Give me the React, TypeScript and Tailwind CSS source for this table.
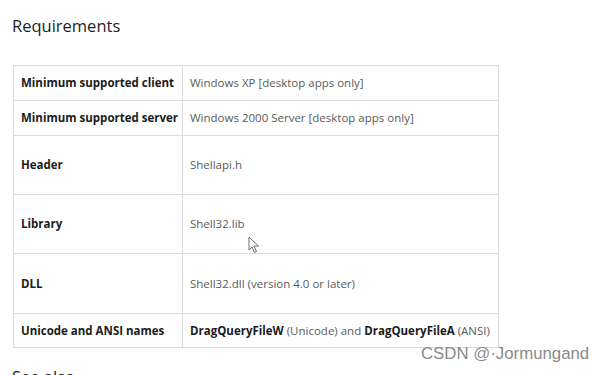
import React from "react";

const rows: { label: string; h: string; value: React.ReactNode }[] = [
  { label: "Minimum supported client", h: "h-[35px]", value: "Windows XP [desktop apps only]" },
  { label: "Minimum supported server", h: "h-[35px]", value: "Windows 2000 Server [desktop apps only]" },
  { label: "Header", h: "h-[59px]", value: "Shellapi.h" },
  { label: "Library", h: "h-[59px]", value: "Shell32.lib" },
  { label: "DLL", h: "h-[60px]", value: "Shell32.dll (version 4.0 or later)" },
  {
    label: "Unicode and ANSI names",
    h: "h-[34px]",
    value: (
      <>
        <b className="font-bold text-[#1b1b1b]">DragQueryFileW</b> (Unicode) and{" "}
        <b className="font-bold text-[#1b1b1b]">DragQueryFileA</b> (ANSI)
      </>
    ),
  },
];

export default function App() {
  return (
    <div className="relative w-[592px] h-[375px] overflow-hidden bg-white" style={{ fontFamily: '"Open Sans", "Noto Sans", sans-serif' }}>
      <div className="pl-[12px] pt-[14px]">
        <h2 className="text-[16.5px] leading-[24px] text-[#1e1e1e] font-normal">Requirements</h2>
        <table className="mt-[27px] ml-px border-collapse w-[486px] table-fixed">
          <colgroup>
            <col className="w-[169px]" />
            <col />
          </colgroup>
          <tbody>
            {rows.map((r) => (
              <tr key={r.label} className={r.h}>
                <td className="border border-[#dcdcdc] px-[7px] text-[11.5px] font-bold text-[#1b1b1b] whitespace-nowrap align-middle">
                  {r.label}
                </td>
                <td className="border border-[#dcdcdc] px-[7px] text-[11.5px] text-[#5a5a5a] whitespace-nowrap align-middle">
                  {r.value}
                </td>
              </tr>
            ))}
          </tbody>
        </table>
        <div className="mt-[17px] text-[16.5px] leading-[24px] text-[#1e1e1e]">See also</div>
      </div>
      <svg className="absolute left-[248px] top-[236px]" width="12" height="18" viewBox="0 0 12 18">
        <path d="M1 1 L1 14 L4 11 L6.5 16.5 L8.5 15.5 L6 10 L10.5 10 Z" fill="#ffffff" stroke="#6b6b6b" strokeWidth="1" strokeLinejoin="round" />
      </svg>
      <div className="absolute left-[421px] top-[343px] text-[16.8px] leading-[22px] text-[#8a8a8a]" style={{ fontFamily: '"Liberation Sans", Arial, sans-serif' }}>
        CSDN @·Jormungand
      </div>
    </div>
  );
}
